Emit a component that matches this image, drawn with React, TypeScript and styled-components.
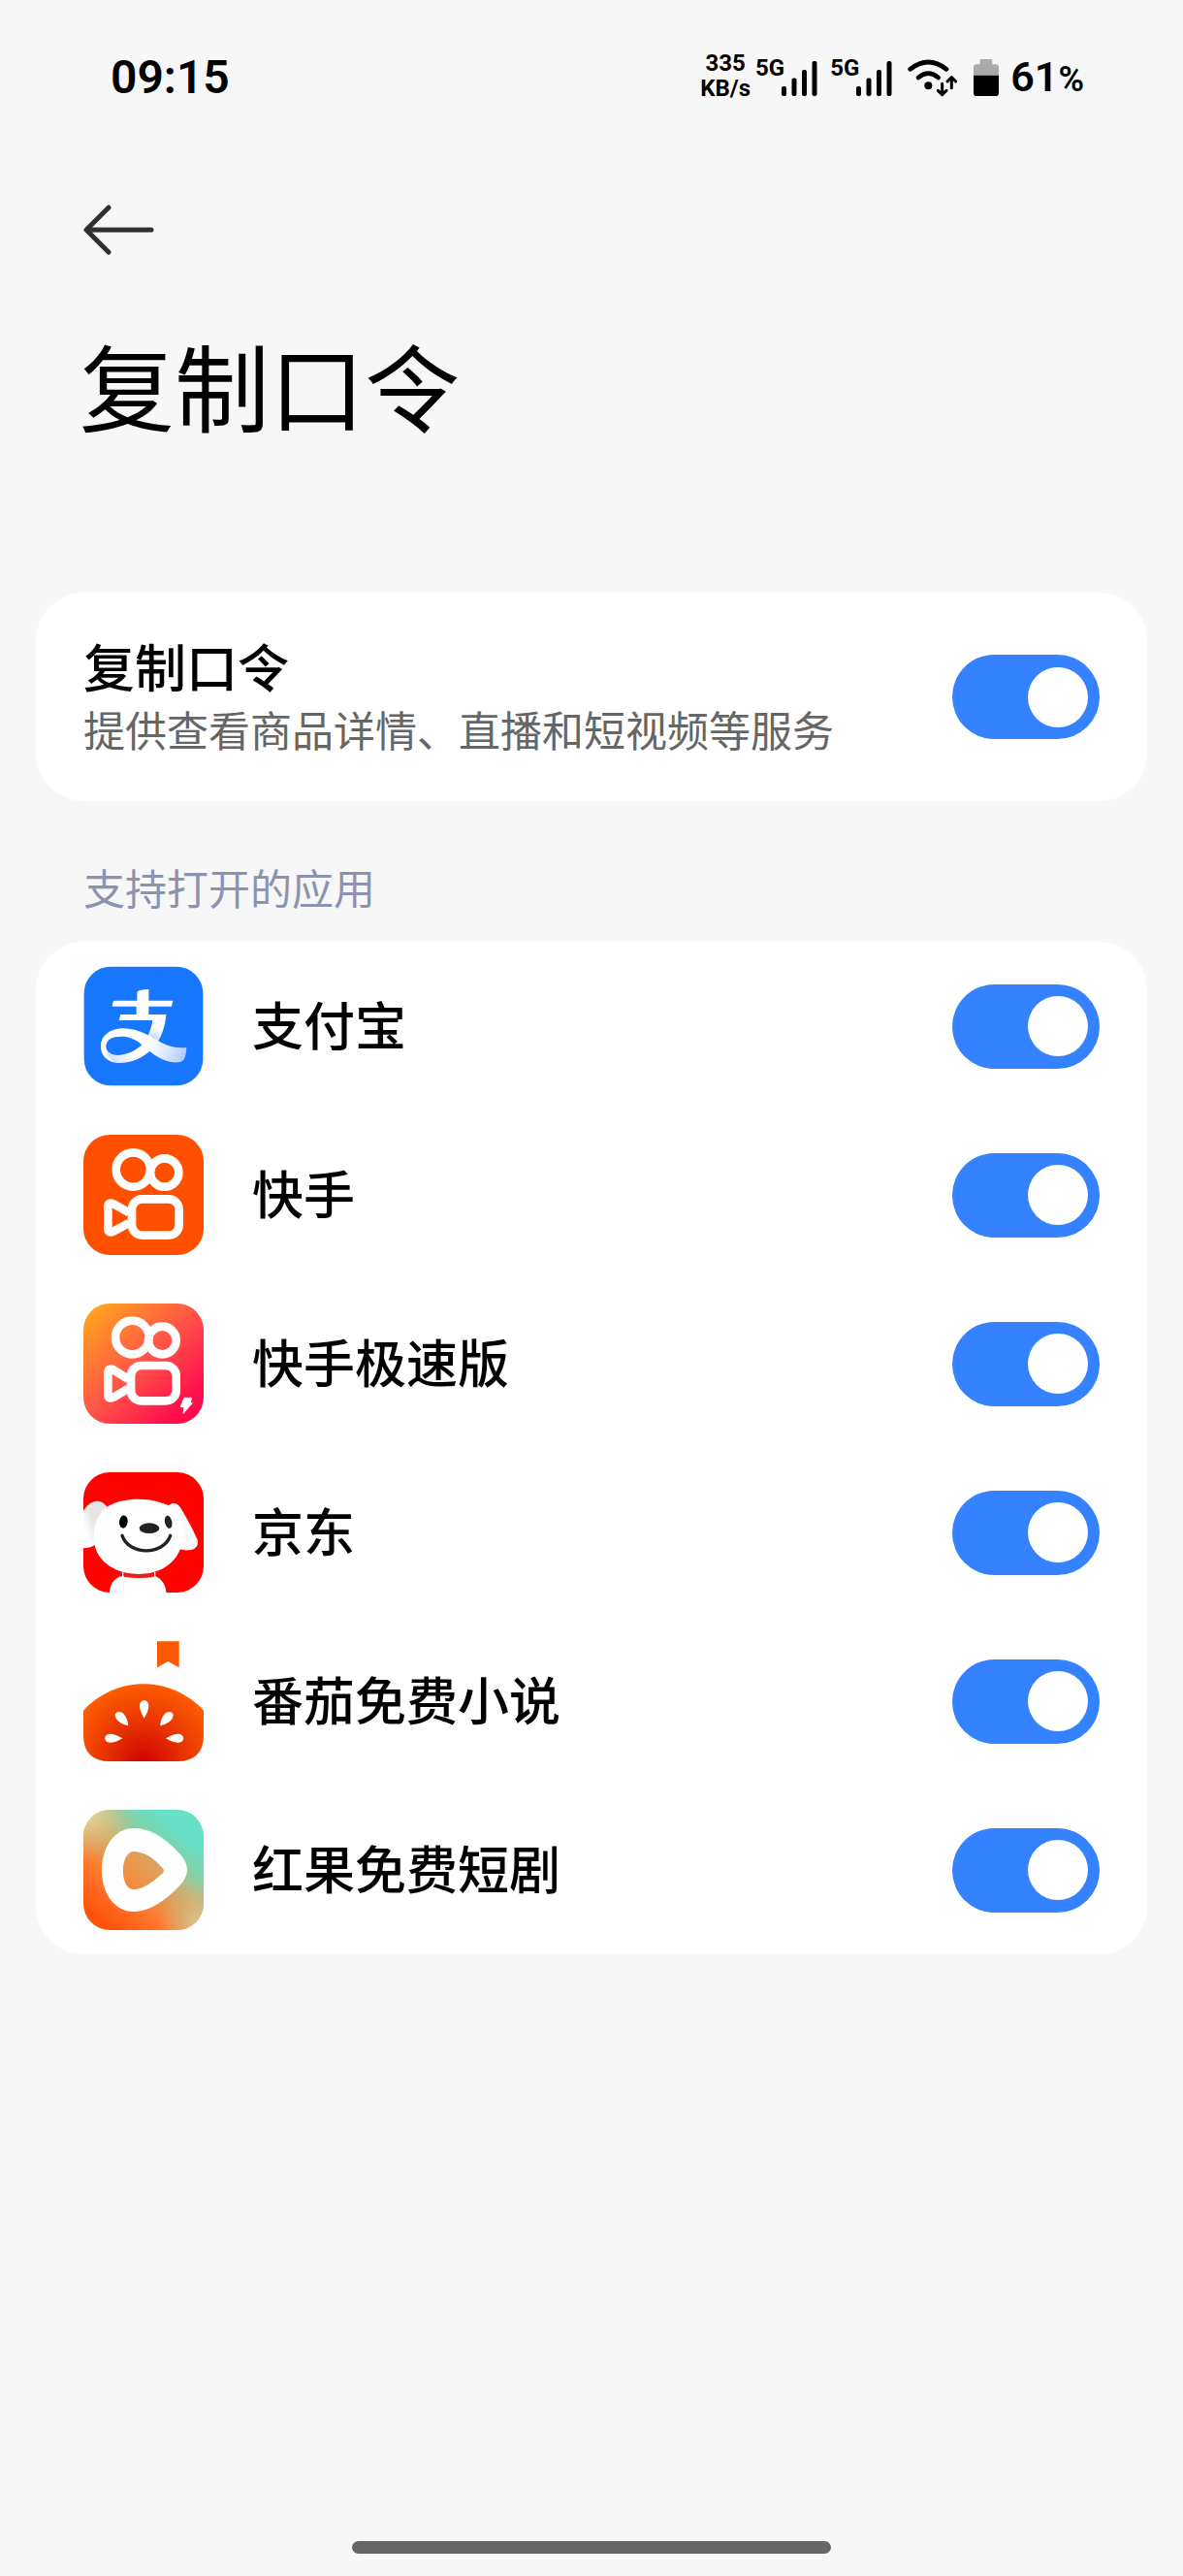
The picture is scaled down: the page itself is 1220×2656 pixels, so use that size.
import React, { useState } from "react";
import styled, { createGlobalStyle } from "styled-components";

const GlobalStyle = createGlobalStyle`
  *, *::before, *::after { box-sizing: border-box; }
  body {
    margin: 0;
    background: #f7f7f7;
    color: #000;
    font-family: Roboto, "Noto Sans CJK SC", sans-serif;
  }
`;

const Page = styled.div`
  min-height: 100vh;
  display: flex;
  flex-direction: column;
`;

const StatusBar = styled.header`
  height: 160px;
  padding: 0 102px 0 114px;
  display: flex;
  align-items: center;
  justify-content: space-between;
`;

const Clock = styled.time`
  font-size: 48px;
  line-height: 56px;
  font-weight: 600;
`;

const StatusGroup = styled.div`
  display: flex;
  align-items: center;
  gap: 16px;
`;

const NetSpeed = styled.div`
  padding-bottom: 4px;
  font-size: 24px;
  line-height: 26px;
  font-weight: 700;
  text-align: center;
`;

const Cluster = styled.div<{ $gap: number }>`
  display: flex;
  align-items: center;
  gap: ${(p) => p.$gap}px;
`;

const Signal = styled.div`
  display: flex;
  align-items: flex-start;
  height: 40px;
  svg { margin: 3px 0 0 -3px; }
`;

const NetType = styled.span`
  font-size: 24px;
  line-height: 20px;
  font-weight: 700;
`;

const BatteryText = styled.span`
  font-size: 43px;
  line-height: 48px;
  font-weight: 600;
  small { font-size: 36px; }
`;

const Nav = styled.nav`
  height: 154px;
  padding: 0 80px;
  display: flex;
  align-items: center;
`;

const BackButton = styled.button`
  border: 0;
  padding: 0;
  background: none;
  display: flex;
  cursor: pointer;
`;

const Title = styled.h1`
  margin: 0;
  padding: 18px 82px 133px;
  font-size: 98px;
  line-height: 146px;
  font-weight: 400;
`;

const Main = styled.main`
  padding: 0 37px;
`;

const Card = styled.section`
  background: #fff;
  border-radius: 50px;
`;

const SettingRow = styled.label<{ $tall?: boolean }>`
  min-height: ${(p) => (p.$tall ? 215 : 174)}px;
  padding: 0 49px;
  display: flex;
  align-items: center;
  gap: 50px;
  cursor: pointer;
`;

const TextBlock = styled.span`
  flex: 1;
  min-width: 0;
  padding-top: 4px;
  display: flex;
  flex-direction: column;
`;

const Name = styled.span`
  font-size: 53px;
  line-height: 68px;
  font-weight: 500;
`;

const Description = styled.span`
  font-size: 43px;
  line-height: 60px;
  color: #666;
`;

const SectionLabel = styled.h2`
  margin: 0;
  padding: 62px 49px 23px;
  font-size: 43px;
  line-height: 60px;
  font-weight: 400;
  color: #8c93b0;
`;

const Switch = styled.input`
  appearance: none;
  flex: none;
  width: 152px;
  height: 87px;
  margin: 0;
  padding: 12px;
  border-radius: 44px;
  background: #e5e5e5;
  display: flex;
  align-items: center;
  cursor: pointer;

  &::before {
    content: "";
    width: 62px;
    height: 62px;
    border-radius: 50%;
    background: #fff;
  }
  &:checked {
    background: #3482ff;
    justify-content: flex-end;
  }
`;

const IconSvg = styled.svg`
  flex: none;
  width: 124px;
  height: 124px;
  display: block;
`;

const HomeBar = styled.div`
  width: 494px;
  max-width: 50%;
  height: 13px;
  margin: auto auto 23px;
  border-radius: 7px;
  background: #666;
`;

const SignalBars = () => (
  <svg width="37" height="36" viewBox="0 0 37 36" aria-hidden="true">
    <rect x="0" y="26" width="5" height="10" rx="2" />
    <rect x="10.5" y="17.5" width="5" height="18.5" rx="2" />
    <rect x="21" y="9" width="5" height="27" rx="2" />
    <rect x="31.5" y="0" width="5" height="36" rx="2" />
  </svg>
);

const Wifi = () => (
  <svg width="52" height="40" viewBox="0 0 156 120" fill="none" stroke="#000" strokeLinecap="round" aria-hidden="true">
    <path d="M8 34Q64-10 120 34" strokeWidth="14" />
    <path d="M33 60Q64 34 95 60" strokeWidth="14" />
    <circle cx="64" cy="85" r="12" fill="#000" stroke="none" />
    <path d="M107 79V112M94 100l13 13 13-13M136 92V60M123 72l13-13 13 13" strokeWidth="9" strokeLinejoin="round" />
  </svg>
);

const Battery = () => (
  <svg width="26" height="38" viewBox="0 0 78 114" aria-hidden="true">
    <path d="M20 4q0-4 4-4h30q4 0 4 4v12h10q10 0 10 10v24H0V26q0-10 10-10h10z" fill="#aaa" />
    <path d="M0 50h78v54q0 10-10 10H10q-10 0-10-10z" />
  </svg>
);

const AlipayIcon = () => (
  <IconSvg viewBox="50 46 372 372" aria-hidden="true">
    <defs>
      <linearGradient id="apTail" x1="250" y1="280" x2="370" y2="330" gradientUnits="userSpaceOnUse">
        <stop offset="0" stopColor="#fff" />
        <stop offset="0.45" stopColor="#e2ecff" />
        <stop offset="1" stopColor="#a9c8ff" />
      </linearGradient>
      <linearGradient id="apLoop" x1="130" y1="345" x2="200" y2="305" gradientUnits="userSpaceOnUse">
        <stop offset="0" stopColor="#c9dcff" />
        <stop offset="1" stopColor="#fff" />
      </linearGradient>
      <radialGradient id="apShade" cx="268" cy="268" r="34" gradientUnits="userSpaceOnUse">
        <stop offset="0" stopColor="#c3d8ff" />
        <stop offset="1" stopColor="#c3d8ff" stopOpacity="0" />
      </radialGradient>
    </defs>
    <rect x="52" y="48" width="368" height="368" rx="82" fill="#1777ff" />
    <path d="M216 129q1-6 7-7 14-4 29-4v35h75l-4 18h-71v25h54c-3 38-15 78-45 108-32 31-72 45-112 41-31-4-46-27-45-50l15-2c2 19 18 30 40 29 39-3 72-24 88-53 8-17 14-35 17-55h-104l5-18h49v-25h-75l2-12q1-6 6-6h69z" fill="url(#apLoop)" />
    <path d="M306 196c-3 38-15 78-45 108l-34-8c20-22 32-50 37-82z" fill="url(#apShade)" />
    <path d="M104 292c0-31 31-53 70-53 49 0 86 28 119 45 25 12 48 17 76 14-1 21-4 45-24 46-47 5-91-33-122-61-23-18-52-22-76-17-19 4-29 19-27 35 1 19 12 33 26 43-25-8-42-26-42-52z" fill="url(#apTail)" />
  </IconSvg>
);

const OrangeCameraIcon = () => (
  <IconSvg viewBox="48 42 372 372" aria-hidden="true">
    <rect x="48" y="42" width="372" height="372" rx="82" fill="#ff5000" />
    <g fill="none" stroke="#fff" strokeWidth="26" strokeLinejoin="round">
      <circle cx="202" cy="150" r="53" />
      <circle cx="299" cy="159" r="44" />
      <rect x="198" y="241" width="146" height="112" rx="32" />
      <path d="M189 283L141 256Q124 248 124 265V332Q124 349 141 341L189 315" />
    </g>
  </IconSvg>
);

const GradientCameraIcon = () => (
  <IconSvg viewBox="48 39 372 372" aria-hidden="true">
    <defs>
      <linearGradient id="liteBg" x1="60" y1="60" x2="380" y2="390" gradientUnits="userSpaceOnUse">
        <stop offset="0" stopColor="#ffa51c" />
        <stop offset="0.5" stopColor="#ff5648" />
        <stop offset="0.9" stopColor="#ff114c" />
        <stop offset="1" stopColor="#ff0a4d" />
      </linearGradient>
    </defs>
    <rect x="48" y="39" width="372" height="372" rx="82" fill="url(#liteBg)" />
    <g fill="none" stroke="#fff" strokeWidth="26" strokeLinejoin="round">
      <circle cx="199" cy="144" r="52" />
      <circle cx="292" cy="153" r="43" />
      <rect x="195" y="231" width="140" height="109" rx="32" />
      <path d="M187 273L141 244Q124 237 124 254V320Q124 337 141 329L187 302" />
    </g>
    <path d="M360 331h23l-5 16h7l-28 32 3-20h-11z" fill="#fff" stroke="#fff" strokeWidth="3" strokeLinejoin="round" />
  </IconSvg>
);

const DogIcon = () => (
  <IconSvg viewBox="48 51 372 372" aria-hidden="true">
    <defs>
      <clipPath id="dogClip">
        <rect x="48" y="51" width="372" height="372" rx="82" />
      </clipPath>
      <linearGradient id="dogEar" x1="48" y1="240" x2="90" y2="225" gradientUnits="userSpaceOnUse">
        <stop offset="0.2" stopColor="#fff" />
        <stop offset="1" stopColor="#e6e6e6" />
      </linearGradient>
    </defs>
    <g clipPath="url(#dogClip)">
      <rect x="48" y="51" width="372" height="372" fill="#fe0400" />
      <path d="M40 185C55 155 72 140 90 140 103 139 113 147 122 158L85 275C75 282 60 286 40 286z" fill="url(#dogEar)" />
      <path d="M312 153C324 143 338 145 348 160C366 190 386 226 400 258C407 276 395 292 374 292C360 293 350 291 342 286z" fill="#fafafa" />
      <path d="M129 423C129 398 145 376 168 372H270C291 381 303 400 304 423z" fill="#fff" />
      <path d="M178 375q-10 22-5 48" fill="none" stroke="#e6e6e6" strokeWidth="2" />
      <path d="M80 253C80 205 98 171 126 155 153 140 181 134 218 134 262 134 290 144 316 156 345 172 357 207 357 242 357 304 310 366 218 366 136 366 80 317 80 253z" fill="#fff" />
      <path d="M174 362q46 8 92 0v13q-46 6-92 0z" fill="#e12020" />
      <path d="M170 360v16M269 360v16" stroke="#fff" strokeWidth="4" />
      <ellipse cx="172" cy="204" rx="13" ry="20" transform="rotate(7 172 204)" />
      <ellipse cx="311" cy="205" rx="11" ry="20" fill="#252525" transform="rotate(-12 311 205)" />
      <ellipse cx="252" cy="224" rx="31" ry="16" fill="#222" />
      <path d="M168 247C190 309 295 309 317 247" fill="none" stroke="#222" strokeWidth="10" strokeLinecap="round" />
    </g>
  </IconSvg>
);

const TomatoIcon = () => (
  <IconSvg viewBox="48 47 372 372" aria-hidden="true">
    <defs>
      <radialGradient id="tomato" cx="236" cy="425" r="245" gradientUnits="userSpaceOnUse">
        <stop offset="0" stopColor="#cf0000" />
        <stop offset="0.45" stopColor="#e52e00" />
        <stop offset="1" stopColor="#ff5c00" />
      </radialGradient>
    </defs>
    <path d="M276 48h68v81l-34-19-34 19z" fill="#fb5a00" />
    <path d="M48 262C98 209 163 180 234 180s136 29 186 82v75q0 82-82 82H130q-82 0-82-82z" fill="url(#tomato)" />
    <g fill="#fff">
      <path d="M236 286C228 272 222 259 222 247C222 225 250 225 250 247C250 259 244 272 236 286z" />
      <path d="M187 309C171 305 156 298 149 286C138 267 161 260 173 273C181 282 185 295 187 309z" />
      <path d="M285 309C301 305 316 298 323 286C334 267 311 260 299 273C291 282 287 295 285 309z" />
      <path d="M169 348C155 357 142 362 130 361C109 360 109 335 130 334C142 334 155 340 169 348z" />
      <path d="M303 348C317 357 330 362 342 361C363 360 363 335 342 334C330 334 317 340 303 348z" />
    </g>
  </IconSvg>
);

const PlayIcon = () => (
  <IconSvg viewBox="48 44 372 372" aria-hidden="true">
    <defs>
      <linearGradient id="playBg" x1="110" y1="390" x2="345" y2="110" gradientUnits="userSpaceOnUse">
        <stop offset="0" stopColor="#ff530d" />
        <stop offset="0.3" stopColor="#ff7a2e" />
        <stop offset="0.62" stopColor="#c8b274" />
        <stop offset="0.82" stopColor="#7fd3aa" />
        <stop offset="1" stopColor="#66e0c6" />
      </linearGradient>
      <radialGradient id="playCorner" cx="55" cy="50" r="150" gradientUnits="userSpaceOnUse">
        <stop offset="0" stopColor="#e2dba0" />
        <stop offset="1" stopColor="#e2c080" stopOpacity="0" />
      </radialGradient>
      <radialGradient id="playLow" cx="410" cy="400" r="130" gradientUnits="userSpaceOnUse">
        <stop offset="0" stopColor="#d8c898" />
        <stop offset="1" stopColor="#e0b070" stopOpacity="0" />
      </radialGradient>
    </defs>
    <rect x="48" y="44" width="372" height="372" rx="82" fill="url(#playBg)" />
    <rect x="48" y="44" width="372" height="372" rx="82" fill="url(#playCorner)" />
    <rect x="48" y="44" width="372" height="372" rx="82" fill="url(#playLow)" />
    <path
      fillRule="evenodd"
      fill="#fff"
      d="M204 101C262 101 310 140 348 182C376 214 376 247 348 276C312 316 258 359 204 359C145 359 105 302 105 232C105 158 145 101 204 101zM204 173C182 175 171 201 171 233C171 264 183 290 203 291C231 289 265 266 292 241Q301 233 292 223C266 194 236 174 204 173z"
    />
    <path d="M204 173C182 175 171 201 171 233C171 264 183 290 203 291C231 289 265 266 292 241Q301 233 292 223C266 194 236 174 204 173z" fill="#f98b3c" fillOpacity="0.5" />
  </IconSvg>
);

const apps = [
  { name: "支付宝", Icon: AlipayIcon },
  { name: "快手", Icon: OrangeCameraIcon },
  { name: "快手极速版", Icon: GradientCameraIcon },
  { name: "京东", Icon: DogIcon },
  { name: "番茄免费小说", Icon: TomatoIcon },
  { name: "红果免费短剧", Icon: PlayIcon },
];

function Toggle() {
  const [on, setOn] = useState(true);
  return <Switch type="checkbox" role="switch" checked={on} onChange={(e) => setOn(e.target.checked)} />;
}

export default function App() {
  return (
    <Page lang="zh-CN">
      <GlobalStyle />
      <StatusBar>
        <Clock>09:15</Clock>
        <StatusGroup>
          <Cluster $gap={5}>
            <NetSpeed>
              <div>335</div>
              <div>KB/s</div>
            </NetSpeed>
            <Cluster $gap={13}>
              <Signal>
                <NetType>5G</NetType>
                <SignalBars />
              </Signal>
              <Signal>
                <NetType>5G</NetType>
                <SignalBars />
              </Signal>
            </Cluster>
          </Cluster>
          <Wifi />
          <Cluster $gap={12}>
            <Battery />
            <BatteryText>
              61<small>%</small>
            </BatteryText>
          </Cluster>
        </StatusGroup>
      </StatusBar>
      <Nav>
        <BackButton type="button" aria-label="返回">
          <svg width="86" height="60" viewBox="0 0 86 60" fill="none" stroke="#303030" strokeWidth="5" strokeLinecap="round" strokeLinejoin="round">
            <path d="M32 7L9 30L32 53M10 30H76" />
          </svg>
        </BackButton>
      </Nav>
      <Title>复制口令</Title>
      <Main>
        <Card>
          <SettingRow $tall>
            <TextBlock>
              <Name>复制口令</Name>
              <Description>提供查看商品详情、直播和短视频等服务</Description>
            </TextBlock>
            <Toggle />
          </SettingRow>
        </Card>
        <SectionLabel>支持打开的应用</SectionLabel>
        <Card>
          {apps.map(({ name, Icon }) => (
            <SettingRow key={name}>
              <Icon />
              <TextBlock>
                <Name>{name}</Name>
              </TextBlock>
              <Toggle />
            </SettingRow>
          ))}
        </Card>
      </Main>
      <HomeBar />
    </Page>
  );
}
